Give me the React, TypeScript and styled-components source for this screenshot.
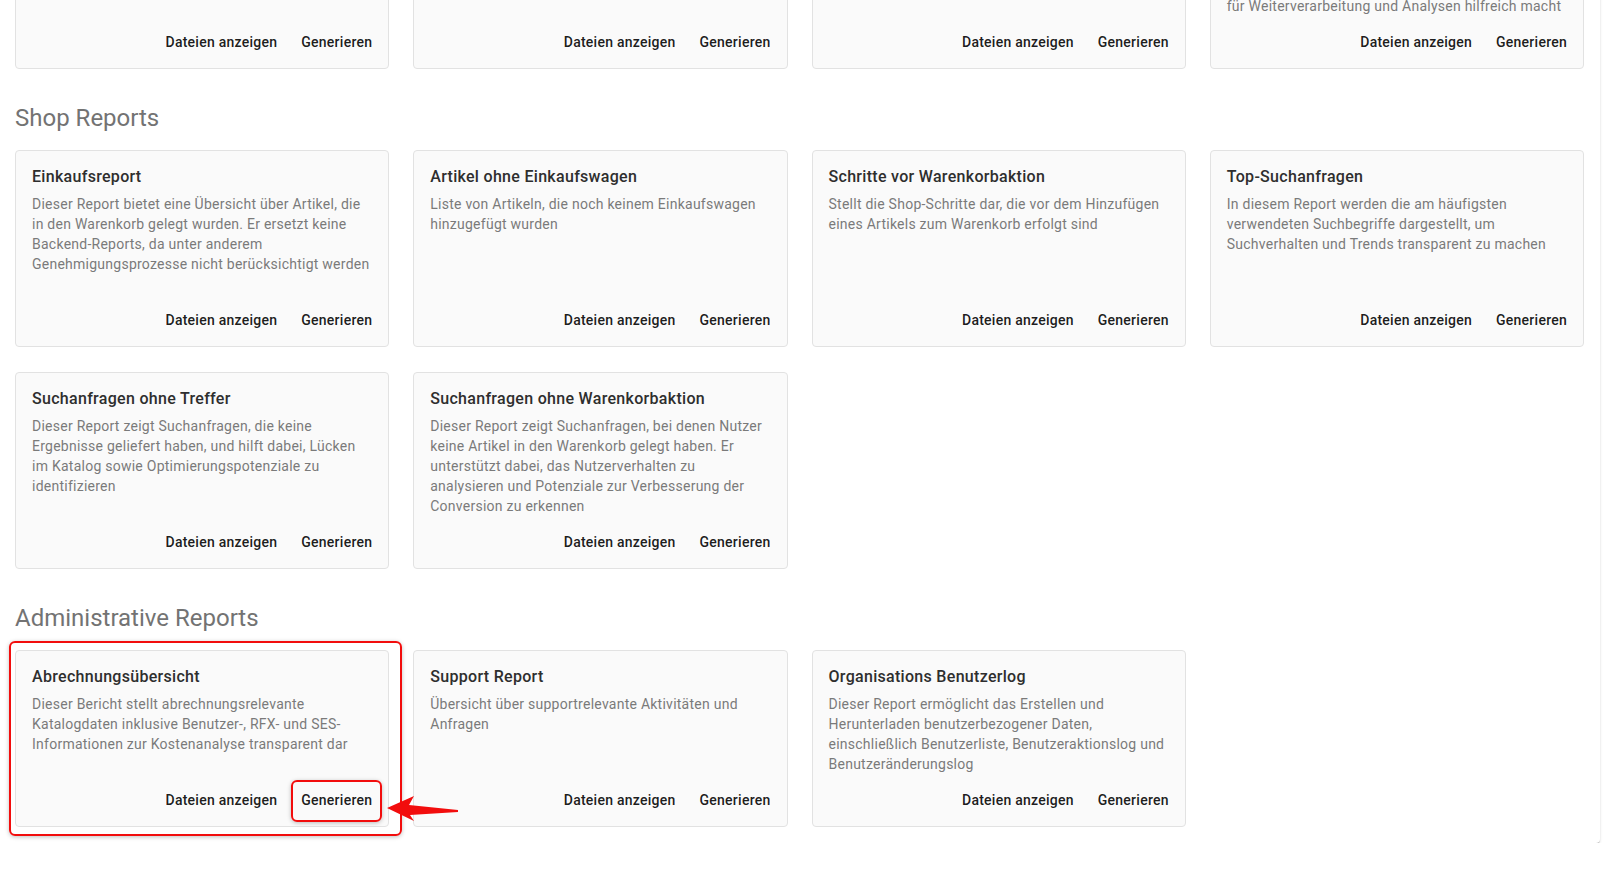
import React from 'react';
import styled, { createGlobalStyle, css } from 'styled-components';

const GlobalStyle = createGlobalStyle`
  html, body {
    margin: 0;
    padding: 0;
    background: #ffffff;
    font-family: Roboto, "Noto Sans", "Liberation Sans", sans-serif;
    overflow: hidden;
  }
`;

// the page is scrolled down, so the panel starts above the window
const Panel = styled.main`
  width: 1600px;
  box-sizing: border-box;
  margin-top: -189px;
  padding: 0 16px 16px 15px;
  background: #ffffff;
  border-radius: 0 0 4px 0;
  box-shadow: 0 2px 1px -1px rgba(0, 0, 0, 0.2), 0 1px 1px 0 rgba(0, 0, 0, 0.14),
    0 1px 3px 0 rgba(0, 0, 0, 0.12);
`;

const SectionTitle = styled.h2`
  margin: 33px 0 16px;
  font-size: 24px;
  line-height: 32px;
  font-weight: 400;
  color: #737373;
`;

const ReportGrid = styled.div`
  display: grid;
  grid-template-columns: repeat(4, 1fr);
  grid-auto-rows: 1fr;
  column-gap: 24px;
  row-gap: 25px;
`;

const ReportCard = styled.div<{ $highlighted?: boolean }>`
  position: relative;
  display: flex;
  flex-direction: column;
  padding: 16px 16px 0;
  background: #fafafa;
  border: 1px solid #e2e2e2;
  border-radius: 4px;

  ${({ $highlighted }) =>
    $highlighted &&
    css`
      &::before {
        content: "";
        position: absolute;
        top: -10px;
        left: -7px;
        right: -14px;
        bottom: -10px;
        border: 2px solid #f20d0d;
        border-radius: 6px;
        box-shadow: 0 1px 4px rgba(0, 0, 0, 0.25);
        pointer-events: none;
      }
    `}
`;

const CardTitle = styled.h3`
  margin: 0 0 7px;
  font-size: 16px;
  line-height: 20px;
  font-weight: 500;
  letter-spacing: 0.3px;
  color: #2e2e2e;
`;

const CardText = styled.p`
  flex: 1;
  margin: 0;
  font-size: 14px;
  line-height: 20px;
  letter-spacing: 0.25px;
  white-space: pre-line;
  color: #7a7a7a;
`;

const CardActions = styled.div`
  display: flex;
  justify-content: flex-end;
  gap: 8px;
  margin: 0 -8px;
  padding: 8px 0;
`;

const ActionButton = styled.button<{ $highlighted?: boolean }>`
  position: relative;
  height: 36px;
  padding: 0 8px;
  border: none;
  border-radius: 4px;
  background: transparent;
  font-family: inherit;
  font-size: 14px;
  font-weight: 500;
  letter-spacing: 0.25px;
  color: rgba(0, 0, 0, 0.9);
  cursor: pointer;

  ${({ $highlighted }) =>
    $highlighted &&
    css`
      &::after {
        content: "";
        position: absolute;
        top: -2px;
        left: -2px;
        right: -2px;
        bottom: -4px;
        border: 2px solid #f20d0d;
        border-radius: 6px;
        box-shadow: 0 1px 4px rgba(0, 0, 0, 0.25);
      }
    `}
`;

const Arrow = styled.svg`
  position: absolute;
  z-index: 2;
  left: 370px;
  top: 143px;
  width: 74px;
  height: 28px;
  overflow: visible;
`;

type Report = {
  title: string;
  text: string;
  highlighted?: boolean;
};

type Section = {
  title: string;
  reports: Report[];
};

const sections: Section[] = [
  {
    title: 'Katalog Reports',
    reports: [
      {
        title: 'Katalogübersicht',
        text: 'Dieser Report bietet eine Übersicht über alle freigegebenen Kataloge und deren aktuellen Status',
      },
      {
        title: 'Preisänderungen',
        text: 'Listet alle Preisänderungen der Artikel innerhalb eines gewählten Zeitraums auf',
      },
      {
        title: 'Artikelstammdaten',
        text: 'Stellt die Stammdaten der Artikel inklusive Lieferanten und Klassifizierungen dar',
      },
      {
        title: 'Katalogexport',
        text: 'Dieser Report exportiert die vollständigen Katalogdaten in ein strukturiertes Tabellenformat, was ihn besonders\nfür Weiterverarbeitung und Analysen hilfreich macht',
      },
    ],
  },
  {
    title: 'Shop Reports',
    reports: [
      {
        title: 'Einkaufsreport',
        text: 'Dieser Report bietet eine Übersicht über Artikel, die in den Warenkorb gelegt wurden. Er ersetzt keine Backend-Reports, da unter anderem Genehmigungsprozesse nicht berücksichtigt werden',
      },
      {
        title: 'Artikel ohne Einkaufswagen',
        text: 'Liste von Artikeln, die noch keinem Einkaufswagen hinzugefügt wurden',
      },
      {
        title: 'Schritte vor Warenkorbaktion',
        text: 'Stellt die Shop-Schritte dar, die vor dem Hinzufügen eines Artikels zum Warenkorb erfolgt sind',
      },
      {
        title: 'Top-Suchanfragen',
        text: 'In diesem Report werden die am häufigsten verwendeten Suchbegriffe dargestellt, um Suchverhalten und Trends transparent zu machen',
      },
      {
        title: 'Suchanfragen ohne Treffer',
        text: 'Dieser Report zeigt Suchanfragen, die keine Ergebnisse geliefert haben, und hilft dabei, Lücken im Katalog sowie Optimierungspotenziale zu identifizieren',
      },
      {
        title: 'Suchanfragen ohne Warenkorbaktion',
        text: 'Dieser Report zeigt Suchanfragen, bei denen Nutzer keine Artikel in den Warenkorb gelegt haben. Er unterstützt dabei, das Nutzerverhalten zu analysieren und Potenziale zur Verbesserung der Conversion zu erkennen',
      },
    ],
  },
  {
    title: 'Administrative Reports',
    reports: [
      {
        title: 'Abrechnungsübersicht',
        text: 'Dieser Bericht stellt abrechnungsrelevante Katalogdaten inklusive Benutzer-, RFX- und SES-Informationen zur Kostenanalyse transparent dar',
        highlighted: true,
      },
      {
        title: 'Support Report',
        text: 'Übersicht über supportrelevante Aktivitäten und Anfragen',
      },
      {
        title: 'Organisations Benutzerlog',
        text: 'Dieser Report ermöglicht das Erstellen und Herunterladen benutzerbezogener Daten, einschließlich Benutzerliste, Benutzeraktionslog und Benutzeränderungslog',
      },
    ],
  },
];

const App = (): JSX.Element => {
  return (
    <>
      <GlobalStyle />
      <Panel>
        {sections.map((section) => (
          <section key={section.title}>
            <SectionTitle>{section.title}</SectionTitle>
            <ReportGrid>
              {section.reports.map((report) => (
                <ReportCard key={report.title} $highlighted={report.highlighted}>
                  <CardTitle>{report.title}</CardTitle>
                  <CardText>{report.text}</CardText>
                  <CardActions>
                    <ActionButton>Dateien anzeigen</ActionButton>
                    <ActionButton $highlighted={report.highlighted}>Generieren</ActionButton>
                  </CardActions>
                  {report.highlighted && (
                    <Arrow viewBox="0 0 74 28">
                      <polygon
                        points="1,14 28,2 23,11 72,16 72,18 24,21 28,27"
                        fill="#f20d0d"
                      />
                    </Arrow>
                  )}
                </ReportCard>
              ))}
            </ReportGrid>
          </section>
        ))}
      </Panel>
    </>
  );
};

export default App;
